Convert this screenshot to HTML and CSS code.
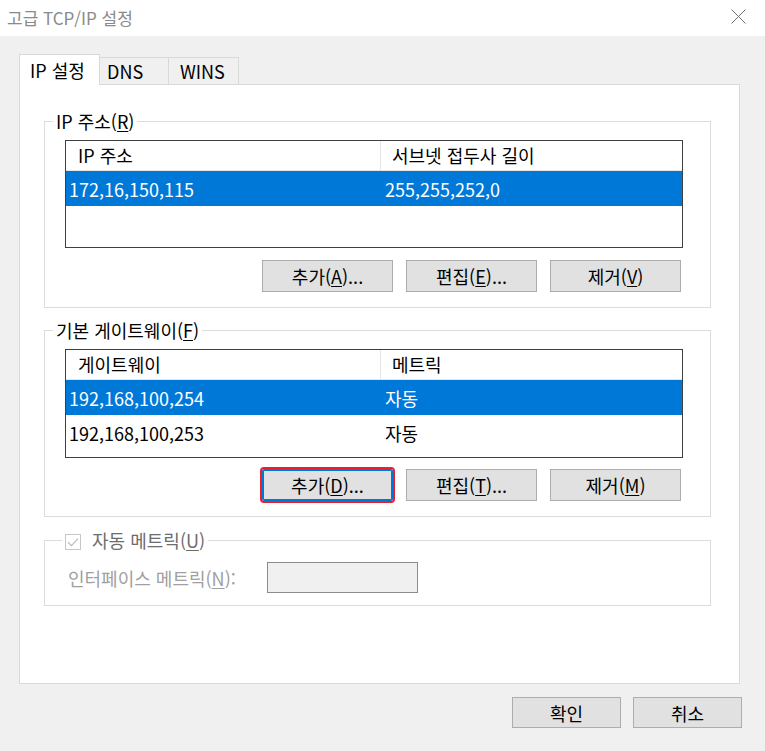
FILE: index.html
```html
<!DOCTYPE html>
<html lang="ko">
<head>
  <meta charset="UTF-8" />
  <title>고급 TCP/IP 설정</title>
  <link rel="stylesheet" href="styles.css">
</head>
<body>

  <div class="titlebar">
    <span class="title">고급 TCP/IP 설정</span>
    <svg class="close" viewBox="0 0 15 15" width="15" height="15">
      <path d="M0.5 0.5 L14.5 14.5 M14.5 0.5 L0.5 14.5" stroke="#707070" stroke-width="1" fill="none"/>
    </svg>
  </div>

  <div class="dialog">
    <div class="tabs">
      <div class="tab active">IP 설정</div>
      <div class="tab dns">DNS</div>
      <div class="tab wins">WINS</div>
    </div>

    <div class="panel">
      <!-- IP addresses -->
      <fieldset class="group">
        <legend>IP 주소(<u>R</u>)</legend>
        <div class="list list-ip">
          <div class="row head">
            <span class="cell">IP 주소</span>
            <span class="cell">서브넷 접두사 길이</span>
          </div>
          <div class="row selected">
            <span class="cell">172,16,150,115</span>
            <span class="cell">255,255,252,0</span>
          </div>
        </div>
        <div class="btns">
          <button class="btn">추가(<u>A</u>)...</button>
          <button class="btn">편집(<u>E</u>)...</button>
          <button class="btn">제거(<u>V</u>)</button>
        </div>
      </fieldset>

      <!-- Default gateways -->
      <fieldset class="group group-gw">
        <legend>기본 게이트웨이(<u>F</u>)</legend>
        <div class="list list-gw">
          <div class="row head">
            <span class="cell">게이트웨이</span>
            <span class="cell">메트릭</span>
          </div>
          <div class="row selected">
            <span class="cell">192,168,100,254</span>
            <span class="cell">자동</span>
          </div>
          <div class="row">
            <span class="cell">192,168,100,253</span>
            <span class="cell">자동</span>
          </div>
        </div>
        <div class="btns btns-gw">
          <button class="btn focused">추가(<u>D</u>)...</button>
          <button class="btn">편집(<u>T</u>)...</button>
          <button class="btn">제거(<u>M</u>)</button>
        </div>
      </fieldset>

      <!-- Metric -->
      <fieldset class="group group-metric">
        <legend>
          <svg class="check" viewBox="0 0 16 16" width="16" height="16">
            <rect x="0.5" y="0.5" width="15" height="15" fill="#fff" stroke="#c6c6c6"/>
            <path d="M3 8.2 L6.4 11.6 L13 4.6" stroke="#bdbdbd" stroke-width="1.3" fill="none"/>
          </svg>
          <span class="check-label">자동 메트릭(<u>U</u>)</span>
        </legend>
        <div class="metric-row">
          <span class="metric-label">인터페이스 메트릭(<u>N</u>):</span>
          <span class="metric-input"></span>
        </div>
      </fieldset>
    </div>

    <div class="footer">
      <button class="btn btn-sm">확인</button>
      <button class="btn btn-sm">취소</button>
    </div>
  </div>

</body>
</html>
```

FILE: styles.css
```css
* {
  margin: 0;
  padding: 0;
  box-sizing: border-box;
}

body {
  width: 765px;
  height: 751px;
  overflow: hidden;
  font-family: "Noto Sans CJK KR", "Noto Sans", sans-serif;
  font-size: 18px;
  line-height: 20px;
  color: #000;
  background: #f0f0f0;
}

u {
  text-decoration: underline;
  text-underline-offset: 2px;
}

/* Title bar */
.titlebar {
  height: 36px;
  background: #fff;
  display: flex;
  align-items: center;
  justify-content: space-between;
  padding: 0 19px 0 7px;
}

.title {
  color: #8a8a8a;
  font-size: 17px;
}

.close {
  display: block;
  margin-top: -3px;
}

/* Dialog body */
.dialog {
  padding: 18px 23px 0 19px;
}

.tabs {
  display: flex;
  align-items: flex-end;
  height: 31px;
  margin-bottom: -1px;
  position: relative;
  z-index: 1;
}

.tab {
  height: 27px;
  margin-bottom: 1px;
  border: 1px solid #d9d9d9;
  border-bottom: none;
  border-left: none;
  background: #f0f0f0;
  padding-top: 3px;
}

.tab.active {
  width: 81px;
  height: 31px;
  margin-bottom: 0;
  border-left: 1px solid #d9d9d9;
  background: #fff;
  padding: 5px 0 0 10px;
}

.tab.dns {
  width: 69px;
  padding-left: 7px;
}

.tab.wins {
  width: 70px;
  padding-left: 11px;
}

.panel {
  width: 721px;
  height: 600px;
  border: 1px solid #d9d9d9;
  background: #fff;
  padding: 26px 0 0 24px;
}

/* Group boxes */
.group {
  width: 667px;
  min-width: 0;
  border: 1px solid #dcdcdc;
  padding: 9px 27px 15px 20px;
}

.group legend {
  margin-left: -12px;
  padding: 0 3px;
  line-height: 20px;
}

.group-gw {
  margin-top: 12px;
}

.group-metric {
  margin-top: 13px;
  padding: 12px 20px 12px 23px;
}

.group-metric legend {
  margin-left: -6px;
}

/* List views */
.list {
  width: 618px;
  height: 108px;
  border: 1px solid #3f3f3f;
  background: #fff;
}

.list-gw {
  height: 109px;
}

.row {
  display: grid;
  grid-template-columns: 315px 1fr;
  height: 35px;
  align-items: center;
}

.row .cell {
  padding-left: 3px;
  white-space: nowrap;
}

.row .cell + .cell {
  padding-left: 4px;
}

.row.head {
  height: 30px;
  border-bottom: 1px solid #e5e5e5;
  align-items: stretch;
}

.row.head .cell {
  padding: 4px 0 0 12px;
  border-right: 1px solid #e5e5e5;
}

.row.head .cell + .cell {
  padding-left: 11px;
  border-right: none;
}

.row.selected {
  background: #0078d7;
  color: #fff;
}

/* Buttons */
.btns {
  display: flex;
  justify-content: flex-end;
  gap: 13px;
  margin-top: 12px;
  padding-right: 2px;
}

.btns-gw {
  margin-top: 11px;
}

.btn {
  width: 131px;
  height: 32px;
  background: #e1e1e1;
  border: 1px solid #adadad;
  font-family: inherit;
  font-size: 18px;
  line-height: 20px;
  color: #000;
}

.btn.focused {
  border-color: #0078d7;
  box-shadow: inset 0 0 0 1px #0078d7;
  outline: 2px solid #e8222b;
  outline-offset: 0;
  border-radius: 2px;
}

.btn-sm {
  width: 109px;
  height: 31px;
}

/* Metric group */
.check {
  display: inline-block;
  vertical-align: -2px;
}

.check-label {
  margin-left: 6px;
  color: #6d6d6d;
}

.metric-row {
  display: grid;
  grid-template-columns: 199px 151px;
  align-items: center;
}

.metric-label {
  color: #a0a0a0;
  white-space: nowrap;
}

.metric-input {
  height: 31px;
  background: #f0f0f0;
  border: 1px solid #8c8c8c;
}

.footer {
  display: flex;
  justify-content: flex-end;
  gap: 12px;
  margin-top: 13px;
}
```
